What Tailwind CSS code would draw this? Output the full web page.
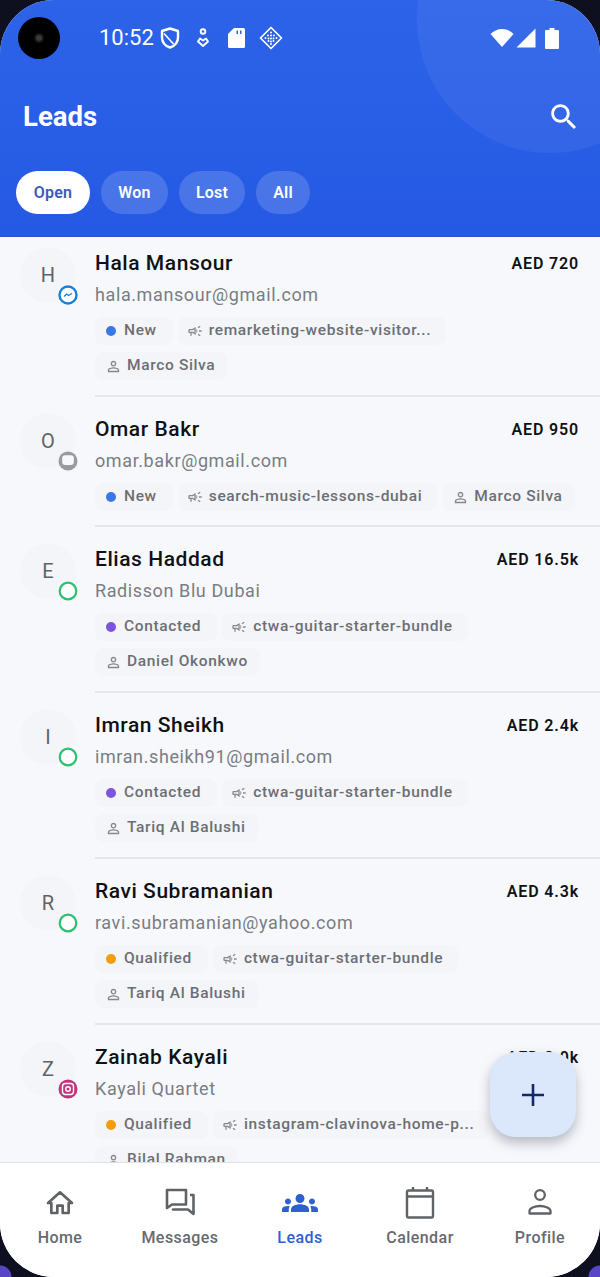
<!DOCTYPE html>
<html lang="en">
<head>
    <meta charset="UTF-8">
    <meta name="viewport" content="width=device-width, initial-scale=1.0">
    <title>Leads</title>
    <script src="https://cdn.jsdelivr.net/npm/@tailwindcss/browser@4"></script>
</head>
<body class="bg-[#0e1020] bg-[radial-gradient(circle_at_0_100%,#5a45c8_11px,transparent_12px),radial-gradient(circle_at_100%_100%,#5a45c8_11px,transparent_12px)] font-['Roboto',sans-serif]">
    <div class="w-[600px] h-[1277px] flex flex-col overflow-hidden relative rounded-[54px] bg-[#f7f8fc]">

        <!-- header -->
        <header class="h-[237px] shrink-0 relative overflow-hidden bg-gradient-to-b from-[#2d63e8] to-[#2559e4] border-b border-[#2350c8] text-white z-10">
            <div class="absolute left-[417px] top-[-113px] w-[266px] h-[266px] rounded-full bg-white/[0.05]"></div>
            <div class="relative h-[76px] flex items-center pl-[18px] pr-[41px]">
                <div class="w-[42px] h-[42px] rounded-full bg-black flex items-center justify-center">
                    <div class="w-[10px] h-[10px] rounded-full bg-[#3a3a3e] border-2 border-[#17171a]"></div>
                </div>
                <span class="ml-[39px] text-[22px] leading-none">10:52</span>
                <svg class="ml-[6px]" width="20" height="24" viewBox="0 0 20 24" fill="none" stroke="white" stroke-width="2.400" stroke-linejoin="round"><path d="M10 2.500 2 5v6.500c0 5 3.500 8.500 8 10 4.500-1.500 8-5 8-10V5Z"/><path d="M4 7.500 13.500 18" stroke-width="1.600"/></svg>
                <svg class="ml-[16px]" width="14" height="22" viewBox="0 0 14 22" fill="none" stroke="white" stroke-width="1.900"><circle cx="7" cy="4.500" r="2.300"/><path d="M7 19 2 14.500 4 11.500l3 2 3-2 2 3Z" stroke-linejoin="round"/></svg>
                <svg class="ml-[18px]" width="17" height="20" viewBox="0 0 17 20" fill="white"><path d="M6 0h9.500A1.500 1.500 0 0 1 17 1.500v17a1.500 1.500 0 0 1-1.500 1.500h-14A1.500 1.500 0 0 1 0 18.500V6Z"/><path d="M8.500 2.500h1.500v3.500H8.500zM12 2.500h1.500v3.500H12z" fill="#2d63e8"/></svg>
                <svg class="ml-[14px]" width="24" height="24" viewBox="0 0 24 24" fill="none" stroke="white" stroke-width="1.700"><path d="M12 1.500 22.500 12 12 22.500 1.500 12Z" stroke-linejoin="round"/><path d="M12 6.500v.01M9 9.500v.01M12 9.500v.01M15 9.500v.01M6.500 12v.01M9.500 12.500v.01M12 12.500v.01M14.500 12.500v.01M17.500 12v.01M9.500 15v.01M12 15.500v.01M14.500 15v.01M12 18v.01" stroke-width="2" stroke-linecap="round"/></svg>
                <svg class="ml-auto" width="24" height="20" viewBox="0 0 24 20" fill="white"><path d="M12 19 0.500 6C3.500 3 7.500 1 12 1s8.500 2 11.500 5Z"/></svg>
                <svg class="ml-[2px]" width="20" height="20" viewBox="0 0 20 20" fill="white"><path d="M19.500 0.500V19.500H0.500Z"/></svg>
                <svg class="ml-[9px]" width="14" height="21" viewBox="0 0 14 21" fill="white"><path d="M4.500 0h5v2H13a1 1 0 0 1 1 1v17a1 1 0 0 1-1 1H1a1 1 0 0 1-1-1V3a1 1 0 0 1 1-1h3.500Z"/></svg>
            </div>
            <div class="relative h-[81px] flex items-center justify-between pl-[23px] pr-[19px]">
                <h1 class="text-[27.500px] font-bold leading-none">Leads</h1>
                <svg width="34" height="34" viewBox="0 0 24 24" fill="white"><path d="M15.500 14h-.79l-.28-.27C15.410 12.590 16 11.110 16 9.500 16 5.910 13.090 3 9.500 3S3 5.910 3 9.500 5.910 16 9.500 16c1.610 0 3.090-.59 4.230-1.570l.27.28v.79l5 4.990L20.490 19l-4.990-5zm-6 0C7.010 14 5 11.990 5 9.500S7.010 5 9.500 5 14 7.010 14 9.500 11.990 14 9.500 14z"/></svg>
            </div>
            <div class="relative flex items-center gap-[11px] pl-[16px] mt-[14px] text-[16px] font-semibold tracking-[0.2px]">
                <button class="h-[43px] w-[74px] rounded-full bg-white text-[#3b5cb8]">Open</button>
                <button class="h-[43px] w-[67px] rounded-full bg-white/[0.16]">Won</button>
                <button class="h-[43px] w-[66px] rounded-full bg-white/[0.16]">Lost</button>
                <button class="h-[43px] w-[54px] rounded-full bg-white/[0.16]">All</button>
            </div>
        </header>

        <!-- list -->
        <main id="list" class="flex-1 min-h-0 overflow-hidden -mt-[6px]"></main>

        <!-- bottom nav -->
        <nav class="h-[115px] shrink-0 relative bg-white border-t border-[#dfe1e4] grid grid-cols-5 text-[16px] font-medium tracking-[0.45px] text-[#666a6f]">
            <a class="flex flex-col items-center pt-[22px]">
                <svg class="h-[36px]" width="32" height="32" viewBox="0 0 24 24" fill="none" stroke="#5f6368" stroke-width="2" stroke-linejoin="round"><path d="M12 4 3 12h2.500v7.500h4.500v-5.500h4v5.500h4.500V12H21Z"/></svg>
                <span class="mt-[5px]">Home</span>
            </a>
            <a class="flex flex-col items-center pt-[22px]">
                <svg class="h-[36px]" width="36" height="36" viewBox="0 0 36 36" fill="none" stroke="#5f6368" stroke-width="2.600" stroke-linejoin="round"><path d="M5 5h19v14.500H10L5 23Z"/><path d="M28 10h3.500v19L26 24.500H11V23.500"/></svg>
                <span class="mt-[5px]">Messages</span>
            </a>
            <a class="flex flex-col items-center pt-[22px] text-[#2f5fd0]">
                <svg class="h-[36px]" width="36" height="36" viewBox="0 0 24 24" fill="#2f5fd0"><path d="M4 13c1.100 0 2-.9 2-2s-.9-2-2-2-2 .9-2 2 .9 2 2 2zm1.130 1.100c-.37-.06-.74-.1-1.130-.1-.99 0-1.930.21-2.780.58C.48 14.900 0 15.620 0 16.430V18h4.500v-1.610c0-.83.23-1.610.63-2.290zM20 13c1.100 0 2-.9 2-2s-.9-2-2-2-2 .9-2 2 .9 2 2 2zm4 3.430c0-.81-.48-1.530-1.220-1.850-.85-.37-1.790-.58-2.780-.58-.39 0-.76.04-1.130.1.4.68.63 1.460.63 2.290V18H24v-1.570zm-7.760-2.650c-1.170-.52-2.610-.9-4.240-.9-1.630 0-3.070.39-4.240.9C6.680 14.130 6 15.210 6 16.390V18h12v-1.610c0-1.180-.68-2.260-1.760-2.610zM12 12c1.660 0 3-1.340 3-3s-1.340-3-3-3-3 1.340-3 3 1.340 3 3 3z"/></svg>
                <span class="mt-[5px]">Leads</span>
            </a>
            <a class="flex flex-col items-center pt-[22px]">
                <svg class="h-[36px]" width="36" height="36" viewBox="0 0 36 36" fill="none" stroke="#5f6368" stroke-width="2.400"><rect x="5" y="5.500" width="26" height="27" rx="1.500"/><path d="M5 11.500h26M11 2v3.500M25 2v3.500"/></svg>
                <span class="mt-[5px]">Calendar</span>
            </a>
            <a class="flex flex-col items-center pt-[22px]">
                <svg class="h-[36px]" width="36" height="36" viewBox="0 0 36 36" fill="none" stroke="#5f6368" stroke-width="2.300"><circle cx="18" cy="10" r="4.800"/><path d="M7.500 28.500v-2.500c0-2.500 5-5 10.500-5s10.500 2.500 10.500 5v2.500Z" stroke-linejoin="round"/></svg>
                <span class="mt-[5px]">Profile</span>
            </a>
        </nav>

        <!-- fab -->
        <button class="absolute left-[490px] top-[1052px] w-[86px] h-[85px] rounded-[26px] bg-[#dbe8fb] shadow-[0_6px_12px_rgba(60,70,90,0.35)] flex items-center justify-center">
            <svg width="26" height="26" viewBox="0 0 26 26" fill="none" stroke="#14296b" stroke-width="2.600"><path d="M13 2v22M2 13h22"/></svg>
        </button>
    </div>

    <script>
        const campaign = '<svg width="16" height="16" viewBox="0 0 24 24" fill="#85898e"><path d="M18 11v2h4v-2h-4zm-2 6.610c.96.71 2.210 1.650 3.200 2.390.4-.53.8-1.070 1.200-1.600-.99-.74-2.240-1.680-3.200-2.400-.4.54-.8 1.080-1.200 1.610zM20.400 5.600c-.4-.53-.8-1.070-1.200-1.600-.99.74-2.240 1.680-3.200 2.400.4.53.8 1.070 1.200 1.600.96-.72 2.210-1.650 3.200-2.400zM4 9c-1.100 0-2 .9-2 2v2c0 1.100.9 2 2 2h1v4h2v-4h1l5 3V6L8 9H4zm5.030 1.710L11 9.530v4.940l-1.970-1.180-.48-.29H4v-2h4.550l.48-.29zM15.500 12c0-1.330-.58-2.530-1.500-3.350v6.690c.92-.81 1.500-2.010 1.500-3.340z"/></svg>';
        const person = '<svg width="17" height="17" viewBox="0 0 24 24" fill="#85898e"><path d="M12 5.900c1.160 0 2.100.94 2.100 2.100s-.94 2.100-2.100 2.100S9.900 9.160 9.900 8s.94-2.100 2.100-2.100m0 9c2.970 0 6.100 1.460 6.100 2.100v1.100H5.900V17c0-.64 3.130-2.100 6.100-2.100M12 4C9.790 4 8 5.790 8 8s1.790 4 4 4 4-1.790 4-4-1.790-4-4-4zm0 9c-2.670 0-8 1.340-8 4v3h16v-3c0-2.660-5.330-4-8-4z"/></svg>';
        const badges = {
            messenger: '<svg width="20" height="20" viewBox="0 0 20 20"><circle cx="10" cy="10" r="8.500" fill="white" stroke="#1480d8" stroke-width="2.400"/><path d="M6 11.500 8.500 9l2 1.500L14 8.500" fill="none" stroke="#1480d8" stroke-width="1.300"/></svg>',
            chat: '<svg width="20" height="20" viewBox="0 0 20 20"><circle cx="10" cy="10" r="9.500" fill="#9b9b9e"/><rect x="4.200" y="4.200" width="11.600" height="9.800" rx="3" fill="#f7f8fc"/></svg>',
            whatsapp: '<svg width="20" height="20" viewBox="0 0 20 20"><circle cx="10" cy="10" r="8.300" fill="white" stroke="#2fbf71" stroke-width="2.200"/></svg>',
            instagram: '<svg width="20" height="20" viewBox="0 0 20 20"><circle cx="10" cy="10" r="9.500" fill="#c1357f"/><rect x="4.500" y="4.500" width="11" height="11" rx="3" fill="none" stroke="white" stroke-width="1.400"/><circle cx="10" cy="10" r="2.300" fill="none" stroke="white" stroke-width="1.400"/></svg>'
        };
        const dots = { New: 'bg-[#3b78e7]', Contacted: 'bg-[#7b55e0]', Qualified: 'bg-[#f29d0c]' };

        const leads = [
            { name: 'Hala Mansour', sub: 'hala.mansour@gmail.com', amount: 'AED 720', badge: 'messenger', status: 'New', source: 'remarketing-website-visitor...', owner: 'Marco Silva' },
            { name: 'Omar Bakr', sub: 'omar.bakr@gmail.com', amount: 'AED 950', badge: 'chat', status: 'New', source: 'search-music-lessons-dubai', owner: 'Marco Silva', inline: true },
            { name: 'Elias Haddad', sub: 'Radisson Blu Dubai', amount: 'AED 16.5k', badge: 'whatsapp', status: 'Contacted', source: 'ctwa-guitar-starter-bundle', owner: 'Daniel Okonkwo' },
            { name: 'Imran Sheikh', sub: 'imran.sheikh91@gmail.com', amount: 'AED 2.4k', badge: 'whatsapp', status: 'Contacted', source: 'ctwa-guitar-starter-bundle', owner: 'Tariq Al Balushi' },
            { name: 'Ravi Subramanian', sub: 'ravi.subramanian@yahoo.com', amount: 'AED 4.3k', badge: 'whatsapp', status: 'Qualified', source: 'ctwa-guitar-starter-bundle', owner: 'Tariq Al Balushi' },
            { name: 'Zainab Kayali', sub: 'Kayali Quartet', amount: 'AED 8.0k', badge: 'instagram', status: 'Qualified', source: 'instagram-clavinova-home-p...', owner: 'Bilal Rahman' }
        ];

        const chip = 'h-[28px] rounded-lg bg-[#f4f5f8] flex items-center whitespace-nowrap';

        document.getElementById('list').innerHTML = leads.map(lead => `
            <article class="flex">
                <div class="w-[95px] shrink-0 relative pt-[16px] pl-[20px]">
                    <div class="w-[56px] h-[56px] rounded-full bg-[#f4f5f8] flex items-center justify-center text-[20px] text-[#5f6368]">${lead.name[0]}</div>
                    <div class="absolute left-[58px] top-[54px] w-[20px] h-[20px]">${badges[lead.badge]}</div>
                </div>
                <div class="flex-1 min-w-0 pt-[19px] ${lead.name === 'Zainab Kayali' ? '' : 'border-b-2 border-[#e6e7ea]'} ${lead.inline ? 'h-[130px]' : 'h-[166px]'}">
                    <div class="flex items-center justify-between pr-[21px] h-[28px]">
                        <span class="text-[21px] font-medium tracking-[0.55px] text-[#101114]">${lead.name}</span>
                        <span class="text-[16px] font-semibold tracking-[0.85px] text-[#101114]">${lead.amount}</span>
                    </div>
                    <p class="mt-[3px] h-[28px] leading-[28px] text-[18px] tracking-[0.6px] text-[#7a7d82]">${lead.sub}</p>
                    <div class="mt-[8px] pr-[21px] flex flex-wrap gap-x-[5px] gap-y-[7px] text-[15.500px] font-medium tracking-[0.65px] text-[#6b6f75]">
                        <span class="${chip} pl-[11px] pr-[16px]"><span class="w-[10px] h-[10px] rounded-full ${dots[lead.status]} mr-[8px]"></span>${lead.status}</span>
                        <span class="${chip} pl-[9px] pr-[15px]">${campaign}<span class="ml-[6px]">${lead.source}</span></span>
                        <span class="${chip} pl-[10px] pr-[12px]">${person}<span class="ml-[5px]">${lead.owner}</span></span>
                    </div>
                </div>
            </article>
        `).join('');
    </script>
</body>
</html>
